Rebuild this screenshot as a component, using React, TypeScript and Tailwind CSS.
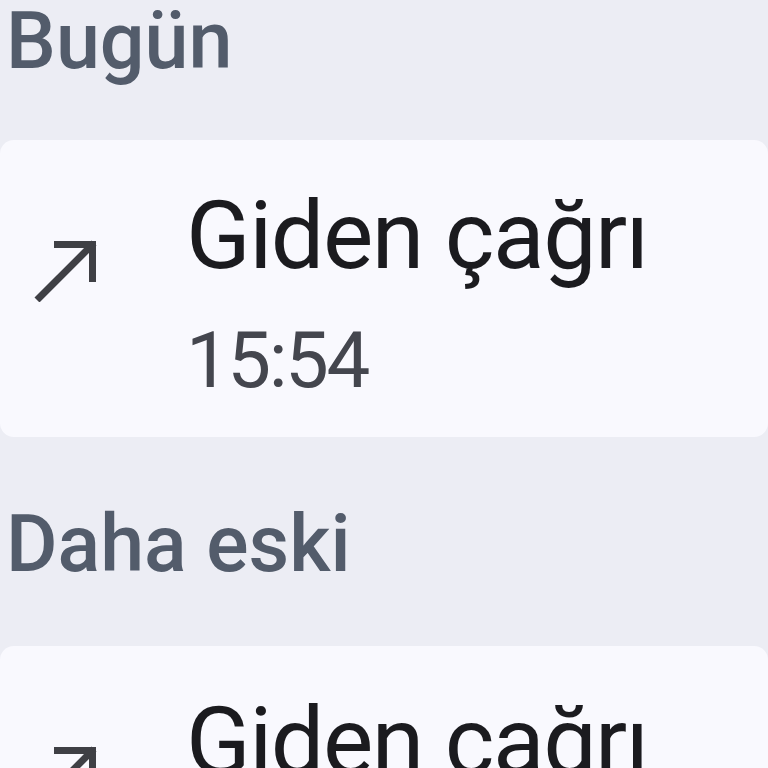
import React from "react";

function Arrow() {
  return (
    <svg width="80" height="80" viewBox="0 0 80 80" className="shrink-0">
      <path d="M 19 78 L 76 21" stroke="#3f4045" strokeWidth="7" fill="none" />
      <path d="M 36 22.5 L 74.5 22.5 L 74.5 60" stroke="#3f4045" strokeWidth="7" fill="none" />
    </svg>
  );
}

function Card({ time }: { time: string }) {
  return (
    <div className="h-[297px] rounded-[14px] bg-[#f9f9fe] flex items-start">
      <div className="pl-[18px] pt-[82px]">
        <Arrow />
      </div>
      <div className="pl-[88px] pt-[48px] flex flex-col">
        <div className="text-[95px] leading-none tracking-[-1.5px] text-[#1b1b1f] whitespace-nowrap">Giden çağrı</div>
        <div className="mt-[39px] text-[78px] leading-none tracking-[-2.5px] text-[#44464e]">{time}</div>
      </div>
    </div>
  );
}

export default function App() {
  return (
    <div
      className="w-[768px] h-[768px] overflow-hidden bg-[#ecedf4]"
      style={{ fontFamily: "Roboto, 'Noto Sans', sans-serif" }}
    >
      <div className="h-[140px] pl-[6px] pt-[2px]">
        <div className="text-[79px] leading-none font-medium text-[#535c6b]">Bugün</div>
      </div>
      <Card time="15:54" />
      <div className="h-[209px] pl-[6px] pt-[68px]">
        <div className="text-[79px] leading-none font-medium text-[#535c6b]">Daha eski</div>
      </div>
      <Card time="12:10" />
    </div>
  );
}
